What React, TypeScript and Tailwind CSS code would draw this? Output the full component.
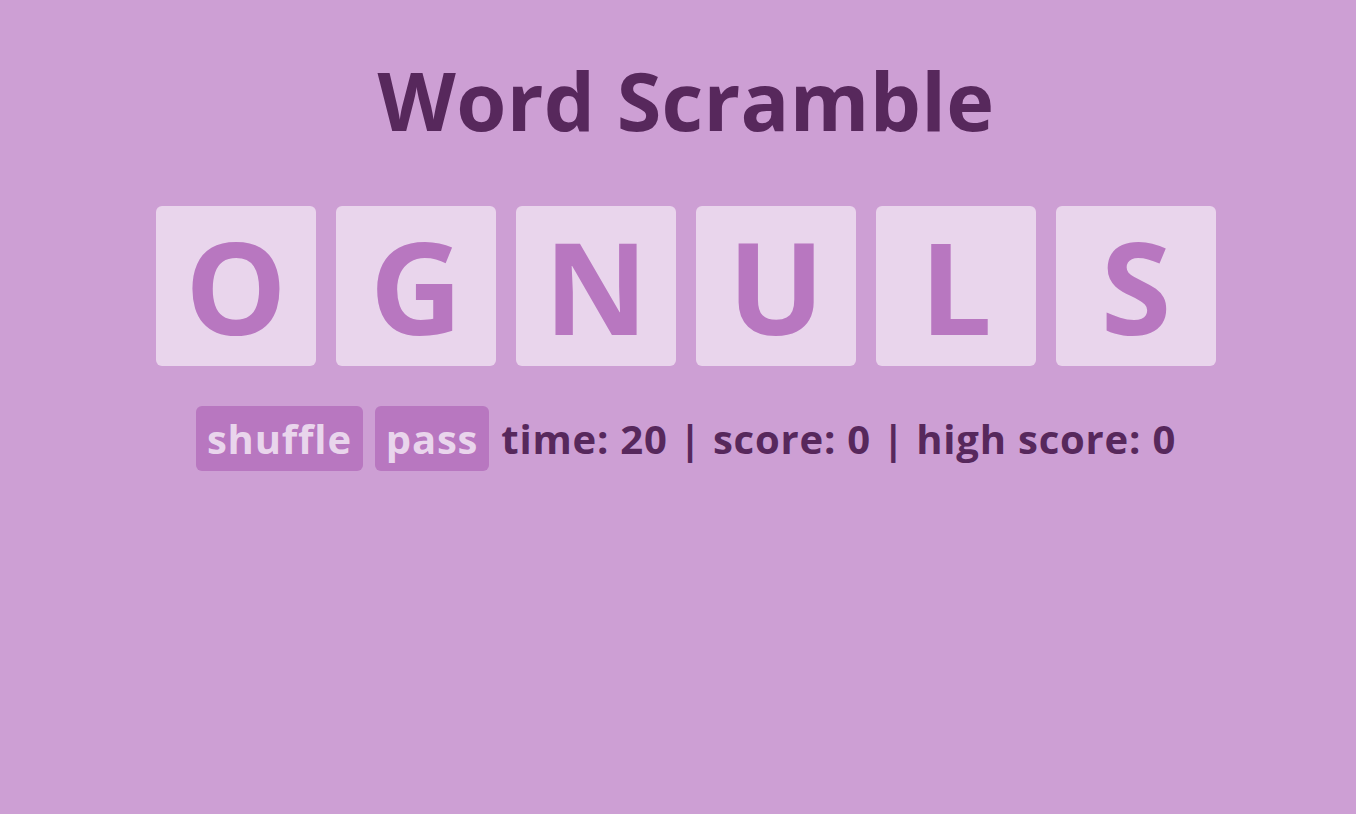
import React from 'react';

const letters = ['O', 'G', 'N', 'U', 'L', 'S'];

export default function App() {
  const [tiles] = React.useState(letters);

  return (
    <div
      className="min-h-screen w-full bg-[#cd9fd4] flex flex-col items-center pl-4"
      style={{ fontFamily: '"Open Sans", "DejaVu Sans", sans-serif' }}
    >
      <h1 className="mt-[52px] text-[81px] leading-[96px] font-bold text-[#57285c] tracking-[0.3px]">Word Scramble</h1>

      {/* Tiles */}
      <div className="mt-[58px] flex gap-5">
        {tiles.map((l, i) => (
          <div
            key={i}
            className="w-40 h-40 rounded-md bg-[#e9d5ec] flex items-center justify-center text-[128px] font-bold text-[#b877c0] leading-none"
          >
            {l}
          </div>
        ))}
      </div>

      {/* Controls */}
      <div className="mt-10 flex items-center gap-3 text-[40px] leading-[48px] font-bold tracking-[0.8px]">
        <button className="h-[65px] px-[11px] rounded-md bg-[#b877c0] text-[#e9d5ec]">shuffle</button>
        <button className="h-[65px] px-[11px] rounded-md bg-[#b877c0] text-[#e9d5ec]">pass</button>
        <span className="text-[#57285c]">time: 20 | score: 0 | high score: 0</span>
      </div>
    </div>
  );
}
